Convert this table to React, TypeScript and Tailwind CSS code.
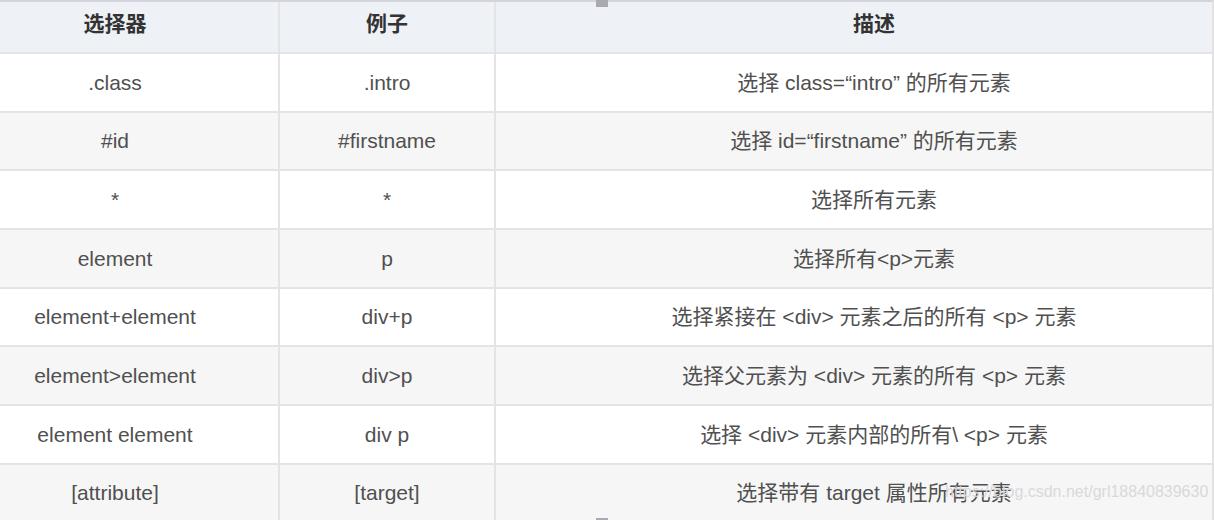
const rows: [string, string, string][] = [
  [".class", ".intro", "选择 class=“intro” 的所有元素"],
  ["#id", "#firstname", "选择 id=“firstname” 的所有元素"],
  ["*", "*", "选择所有元素"],
  ["element", "p", "选择所有<p>元素"],
  ["element+element", "div+p", "选择紧接在 <div> 元素之后的所有 <p> 元素"],
  ["element>element", "div>p", "选择父元素为 <div> 元素的所有 <p> 元素"],
  ["element element", "div p", "选择 <div> 元素内部的所有\\ <p> 元素"],
  ["[attribute]", "[target]", "选择带有 target 属性所有元素"],
];

function Row({
  cells,
  className,
  cellClass,
}: {
  cells: [string, string, string];
  className: string;
  cellClass: string;
}) {
  return (
    <div className={`flex border-b-2 border-[#e4e4e4] ${className}`}>
      <div className={`flex w-[280px] shrink-0 items-center justify-center border-r-2 border-[#e4e4e4] pr-[48px] ${cellClass}`}>
        {cells[0]}
      </div>
      <div className={`flex w-[216px] shrink-0 items-center justify-center border-r-2 border-[#e4e4e4] ${cellClass}`}>
        {cells[1]}
      </div>
      <div className={`flex flex-1 items-center justify-center pl-[40px] ${cellClass}`}>
        {cells[2]}
      </div>
    </div>
  );
}

export default function App() {
  return (
    <div
      className="relative h-[520px] w-[1214px] overflow-hidden bg-white"
      style={{ fontFamily: '"Liberation Sans", "Noto Sans CJK SC", sans-serif' }}
    >
      <div className="border-t-2 border-r-2 border-t-[#d4d4dc] border-r-[#e2e2e2]">
        <Row
          cells={["选择器", "例子", "描述"]}
          className="h-[52px] bg-[#eef1f5]"
          cellClass="pb-[6px] text-[21px] font-bold text-[#333333]"
        />
        {rows.map((r, i) => (
          <Row
            key={i}
            cells={r}
            className={`h-[58.7px] ${i % 2 === 0 ? "bg-white" : "bg-[#f6f6f6]"}`}
            cellClass="text-[21px] text-[#505050]"
          />
        ))}
      </div>

      {/* resize handles from the screenshot */}
      <div className="absolute left-[596px] top-0 h-[7px] w-[12px] bg-[#a9a9b1]" />
      <div className="absolute left-[596px] top-[518px] h-[2px] w-[12px] bg-[#a9a9b1]" />

      {/* watermark */}
      <div className="absolute left-[945px] top-[484px] text-[16px] leading-none text-[#d9d9d9]">
        https://blog.csdn.net/grl18840839630
      </div>
    </div>
  );
}
